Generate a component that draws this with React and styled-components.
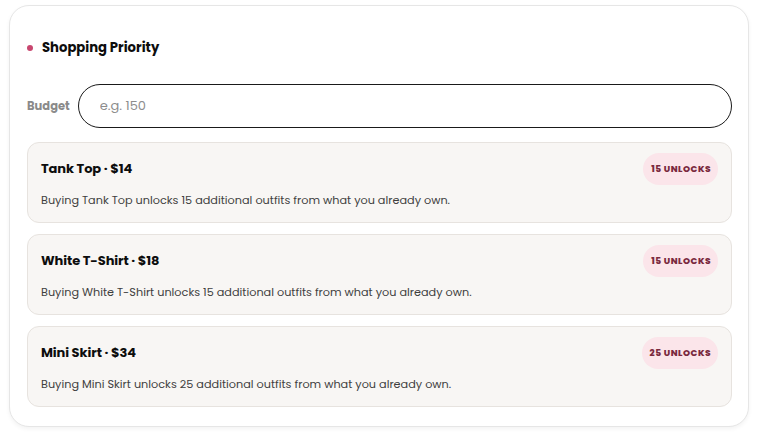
import React from 'react';
import styled, { createGlobalStyle } from 'styled-components';

const GlobalStyle = createGlobalStyle`
  html, body {
    margin: 0;
    padding: 0;
    background: #ffffff;
  }
  body {
    font-family: 'Poppins', 'Inter', 'Liberation Sans', sans-serif;
    color: #111;
  }
`;

const items = [
  { name: 'Tank Top', price: 14, unlocks: 15 },
  { name: 'White T-Shirt', price: 18, unlocks: 15 },
  { name: 'Mini Skirt', price: 34, unlocks: 25 },
];

const Page = styled.div`
  padding: 5px 10px 7px 9px;
`;

const Panel = styled.section`
  box-sizing: border-box;
  width: 740px;
  height: 422px;
  background: #fff;
  border: 1px solid #e6e6e6;
  border-radius: 20px;
  box-shadow: 0 2px 4px rgba(0, 0, 0, 0.05);
  padding: 32px 16px 19px 17px;
  display: flex;
  flex-direction: column;
`;

const Header = styled.h2`
  margin: 0;
  display: flex;
  align-items: center;
  gap: 9px;
  height: 20px;
  font-size: 13.2px;
  font-weight: 700;
  color: #0d0d0d;
`;

const Dot = styled.span`
  width: 6px;
  height: 6px;
  border-radius: 50%;
  background: #c8476f;
  flex-shrink: 0;
`;

const BudgetRow = styled.label`
  margin-top: 26px;
  display: flex;
  align-items: center;
  gap: 8px;
`;

const BudgetLabel = styled.span`
  font-size: 11.5px;
  font-weight: 700;
  color: #8a8a8a;
`;

const BudgetInput = styled.input`
  flex: 1;
  box-sizing: border-box;
  height: 44px;
  border: 1px solid #1a1a1a;
  border-radius: 22px;
  padding: 0 21px;
  font-family: inherit;
  font-size: 13px;
  color: #222;
  background: #fff;
  outline: none;

  &::placeholder {
    color: #8d8d8d;
  }
`;

const List = styled.div`
  margin-top: 14px;
  display: flex;
  flex-direction: column;
  gap: 11px;
`;

const Card = styled.article`
  box-sizing: border-box;
  height: 81px;
  background: #f8f6f4;
  border: 1px solid #e7e3df;
  border-radius: 12px;
  padding: 10px 13px 0 13px;
`;

const CardTop = styled.div`
  display: flex;
  align-items: center;
  justify-content: space-between;
  height: 32px;
`;

const ItemTitle = styled.h3`
  margin: 0;
  font-size: 13px;
  font-weight: 700;
  letter-spacing: -0.1px;
  color: #0d0d0d;
`;

const Badge = styled.span`
  display: inline-flex;
  align-items: center;
  height: 32px;
  padding: 0 7px 0 8px;
  border-radius: 16px;
  background: #fbe5ea;
  color: #7a2a3f;
  font-size: 9px;
  font-weight: 800;
  letter-spacing: 0.5px;
`;

const Description = styled.p`
  margin: 7px 0 0;
  font-size: 11.25px;
  line-height: 16px;
  color: #3f3f3f;
`;

export default function App() {
  return (
    <Page>
      <GlobalStyle />
      <Panel>
        <Header>
          <Dot />
          Shopping Priority
        </Header>
        <BudgetRow>
          <BudgetLabel>Budget</BudgetLabel>
          <BudgetInput type="number" placeholder="e.g. 150" />
        </BudgetRow>
        <List>
          {items.map(item => (
            <Card key={item.name}>
              <CardTop>
                <ItemTitle>
                  {item.name} · ${item.price}
                </ItemTitle>
                <Badge>{item.unlocks} UNLOCKS</Badge>
              </CardTop>
              <Description>
                Buying {item.name} unlocks {item.unlocks} additional outfits from what you already own.
              </Description>
            </Card>
          ))}
        </List>
      </Panel>
    </Page>
  );
}
